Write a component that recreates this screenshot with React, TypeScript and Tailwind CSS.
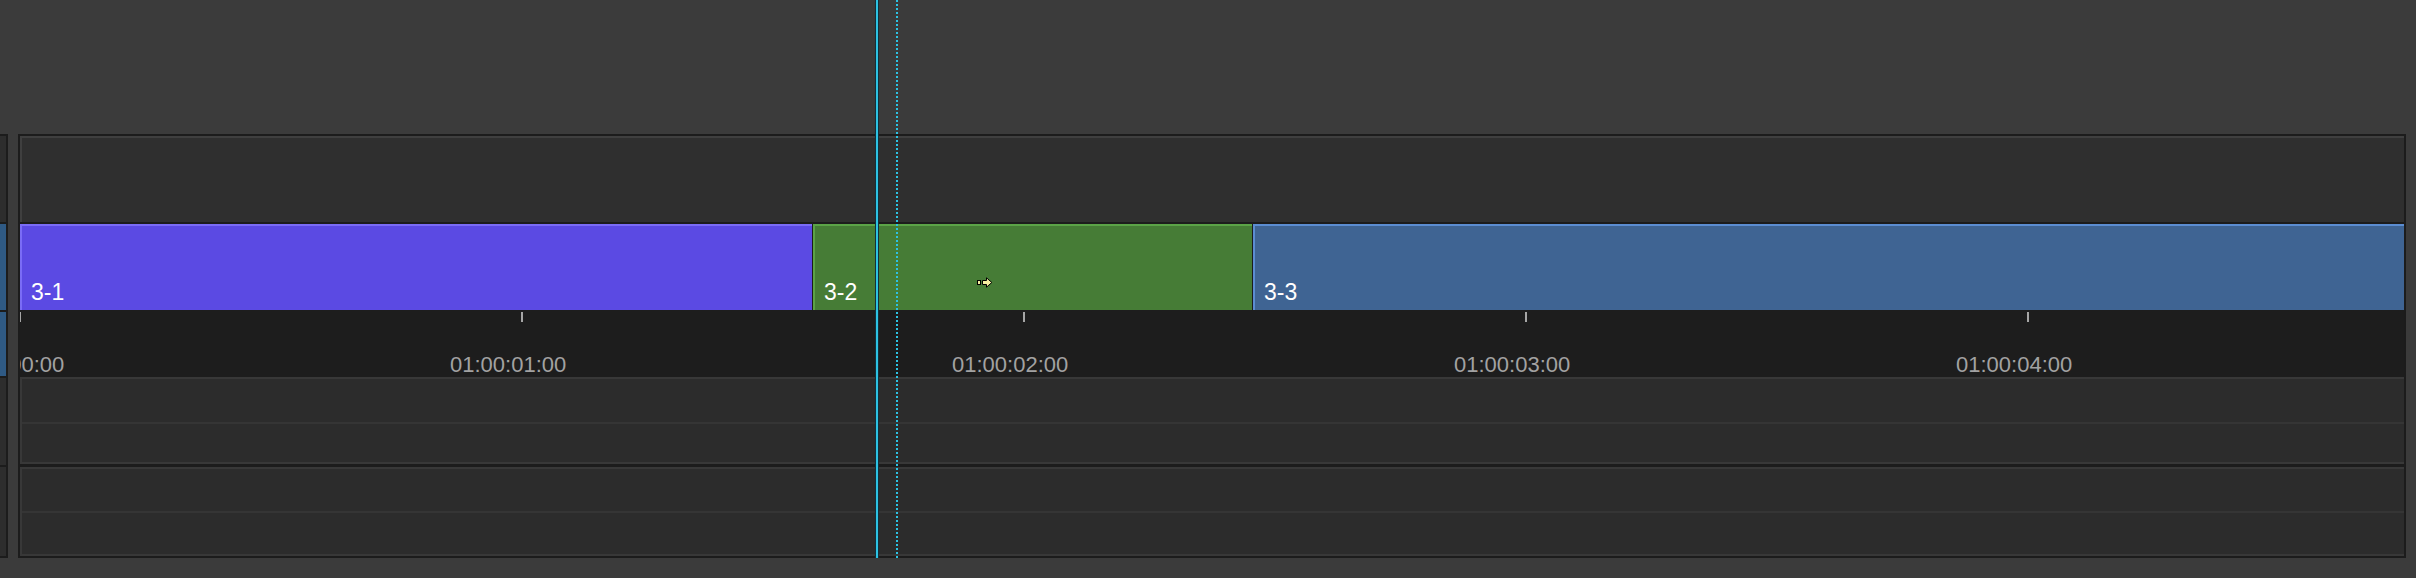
import React from "react"

const clips = [
  { name: "3-1", w: "w-[792px]", cls: "bg-[#5b4ae3] border-[#7a6cf6]" },
  { name: "3-2", w: "w-[439px]", cls: "bg-[#467c36] border-[#5ba347]" },
  { name: "3-3", w: "w-[1151px]", cls: "bg-[#3f6493] border-[#5b8dd2]" },
]

const marks = ["01:00:00:00", "01:00:01:00", "01:00:02:00", "01:00:03:00", "01:00:04:00"]

const AudioTrack = ({ upper, lower }: { upper: string; lower: string }) => (
  <div className="flex flex-col border-t-2 border-l-2 border-[#383838] bg-[#2c2c2c]">
    <div className={upper} />
    <div className="h-[2px] bg-[#353535]" />
    <div className={lower} />
    <div className="h-[2px] bg-[#383838]" />
  </div>
)

const PointerCursor = () => (
  <svg width="16" height="11" viewBox="0 0 16 11" className="block">
    <rect x="0.5" y="3.5" width="3" height="4" fill="#f6efa0" stroke="#000" />
    <path
      d="M5.5 3.5 H9.5 V0.8 L14.8 5.5 L9.5 10.2 V7.5 H5.5 Z"
      fill="#f6efa0"
      stroke="#000"
      strokeLinejoin="miter"
    />
  </svg>
)

export default function App() {
  return (
    <div className="relative h-[578px] w-[2416px] overflow-hidden bg-[#3b3b3b] pt-[134px] font-['Liberation_Sans',Arial,sans-serif]">
      <div className="flex">
        {/* track header strip, scrolled almost out of view */}
        <div className="flex w-[8px] flex-col border-y-2 border-r-2 border-[#1c1c1c]">
          <div className="h-[86px] bg-[#2d2d2d]" />
          <div className="h-[2px] bg-[#1c1c1c]" />
          <div className="h-[86px] bg-[#2f5a84]" />
          <div className="h-[2px] bg-[#1c1c1c]" />
          <div className="h-[64px] bg-[#2f5a84]" />
          <div className="h-[2px] bg-[#1c1c1c]" />
          <div className="h-[87px] bg-[#2d2d2d]" />
          <div className="h-[2px] bg-[#1c1c1c]" />
          <div className="h-[89px] bg-[#2d2d2d]" />
        </div>

        {/* timeline */}
        <div className="ml-[10px] flex w-[2388px] flex-col border-2 border-[#1c1c1c] bg-[#1c1c1c]">
          <div className="h-[86px] border-t-2 border-l-2 border-[#3f3f3f] bg-[#2f2f2f]" />
          <div className="h-[2px]" />

          <div className="flex h-[86px] gap-px">
            {clips.map((c) => (
              <div
                key={c.name}
                className={`flex shrink-0 items-end border-t-2 border-l-2 pb-[6px] pl-[9px] ${c.w} ${c.cls}`}
              >
                <span className="text-[23px] leading-none text-white">{c.name}</span>
              </div>
            ))}
          </div>

          <div className="h-[67px] overflow-hidden bg-[#1d1d1d]">
            <div className="-ml-px flex">
              {marks.map((m) => (
                <div key={m} className="flex w-[502px] shrink-0 flex-col">
                  <div className="mt-[2px] h-[10px] w-[2px] bg-[#a6a6a6]" />
                  <span className="-ml-[71px] mt-[32px] whitespace-nowrap text-[22px] leading-none text-[#a2a2a2]">
                    {m}
                  </span>
                </div>
              ))}
            </div>
          </div>

          <AudioTrack upper="h-[43px]" lower="h-[38px]" />
          <div className="h-[3px]" />
          <AudioTrack upper="h-[42px]" lower="h-[41px]" />
        </div>
      </div>

      {/* playhead and snap guide */}
      <div className="absolute left-[875px] top-0 h-[558px] w-[4px] border-x border-[#14303a] bg-[#2cc3e4]" />
      <div className="absolute left-[896px] top-0 h-[558px] w-[2px] bg-[repeating-linear-gradient(to_bottom,#2cc3e4_0px,#2cc3e4_2px,transparent_2px,transparent_4px)]" />

      <div className="absolute left-[977px] top-[277px]">
        <PointerCursor />
      </div>
    </div>
  )
}
